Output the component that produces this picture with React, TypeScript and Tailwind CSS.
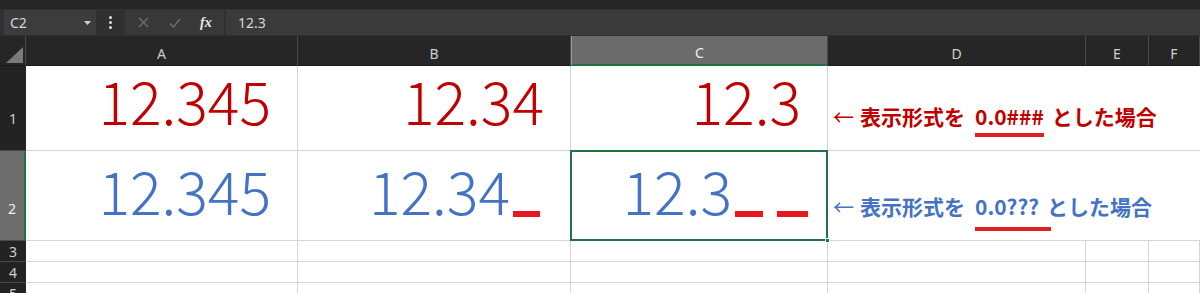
const big = "font-['Noto_Sans_CJK_JP',sans-serif] text-[59px] leading-none font-light";
const ui = "font-['Noto_Sans','Liberation_Sans',sans-serif]";
const jp = "font-['Noto_Sans_CJK_JP',sans-serif]";

const cell = 'border-b border-r border-[#d4d4d4] bg-white';

function Bar({ className = '' }: { className?: string }) {
    return <span className={`inline-block h-[6px] -mb-[2px] bg-[#e8191e] ${className}`} />;
}

function ColHead({ label, selected = false }: { label: string; selected?: boolean }) {
    return (
        <div
            className={`flex items-end justify-center pb-[1px] border-r border-b border-[#4a4a4a] border-b-[#1a1a1a] text-[14px] ${ui} ${
                selected ? 'bg-[#6b6b6b] text-[#f0f0f0] border-b-2 border-b-[#217346] border-l border-l-[#9a9a9a]' : 'bg-[#262626] text-[#cfcfcf]'
            }`}
        >
            {label}
        </div>
    );
}

function RowHead({ n, tall = false, selected = false }: { n: number; tall?: boolean; selected?: boolean }) {
    return (
        <div
            className={`flex justify-center ${tall ? 'items-end pb-[21px]' : 'items-center'} border-b border-[#4a4a4a] text-[14px] ${ui} ${
                selected ? 'bg-[#6d6d6d] text-[#eeeeee] border-r-2 border-r-[#217346]' : 'bg-[#232323] text-[#cfcfcf]'
            }`}
        >
            {n}
        </div>
    );
}

function Note({ color, code, lineClass }: { color: string; code: string; lineClass: string }) {
    return (
        <div className={`whitespace-nowrap text-[21px] leading-none font-bold ${jp} ${color}`}>
            <span className="font-normal">←</span>
            <span className="ml-[6px]">表示形式を</span>
            <span className={`ml-[10px] inline-block border-b-4 border-[#e0201f] ${lineClass}`}>{code}</span>
            <span className="ml-[8px]">とした場合</span>
        </div>
    );
}

export default function App() {
    return (
        <div className="h-[293px] w-[1200px] overflow-hidden bg-[#262626]">
            {/* formula bar */}
            <div className="mt-[9px] flex h-[27px] items-center gap-[2px] bg-[#303030] pl-[4px]">
                <div className={`flex h-[25px] w-[92px] items-center justify-between bg-[#3c3c3c] pl-[6px] pr-[5px] text-[14px] text-[#d6d6d6] ${ui}`}>
                    <span>C2</span>
                    <svg width="7" height="4" viewBox="0 0 7 4">
                        <path d="M0 0h7L3.5 4z" fill="#d0d0d0" />
                    </svg>
                </div>
                <div className="flex w-[24px] flex-col items-center gap-[2px]">
                    <span className="size-[3px] rounded-full bg-[#e0e0e0]" />
                    <span className="size-[3px] rounded-full bg-[#e0e0e0]" />
                    <span className="size-[3px] rounded-full bg-[#e0e0e0]" />
                </div>
                <div className="ml-[1px] flex h-[25px] w-[99px] items-center bg-[#383838] pl-[13px]">
                    <svg width="11" height="11" viewBox="0 0 11 11" className="mr-[20px]">
                        <path d="M1 1l9 9M10 1l-9 9" stroke="#6f6f6f" strokeWidth="1.4" />
                    </svg>
                    <svg width="12" height="10" viewBox="0 0 12 10" className="mr-[19px]">
                        <path d="M1 5.5l3.5 3.5L11 1" stroke="#6f6f6f" strokeWidth="1.4" fill="none" />
                    </svg>
                    <span className="font-['Liberation_Serif',serif] text-[14px] font-bold italic text-[#e8e8e8]">fx</span>
                </div>
                <div className={`flex h-[25px] flex-1 items-center bg-[#3a3a3a] pl-[12px] text-[14px] text-[#d6d6d6] ${ui}`}>12.3</div>
            </div>

            {/* sheet */}
            <div className="grid grid-cols-[26px_272px_273px_257px_258px_63px_1fr] grid-rows-[30px_85px_90px_21px_21px_21px]">
                <div className="flex items-end justify-end border-r border-b border-[#4a4a4a] border-b-[#1a1a1a] pb-[2px] pr-[2px]">
                    <svg width="17" height="16" viewBox="0 0 17 16">
                        <path d="M17 0V16H0z" fill="#7a7a7a" />
                    </svg>
                </div>
                <ColHead label="A" />
                <ColHead label="B" />
                <ColHead label="C" selected />
                <ColHead label="D" />
                <ColHead label="E" />
                <ColHead label="F" />

                {/* row 1 */}
                <RowHead n={1} tall />
                <div className={`${cell} pr-[26px] pt-[4px] text-right text-[#c00000] ${big}`}>12.345</div>
                <div className={`${cell} pr-[26px] pt-[4px] text-right text-[#c00000] ${big}`}>12.34</div>
                <div className={`${cell} pr-[26px] pt-[4px] text-right text-[#c00000] ${big}`}>12.3</div>
                <div className="col-span-3 border-b border-[#d4d4d4] bg-white pl-[5px] pt-[40px]">
                    <Note color="text-[#c00000]" code="0.0###" lineClass="pb-[6px]" />
                </div>

                {/* row 2 */}
                <RowHead n={2} tall selected />
                <div className={`${cell} pr-[26px] pt-[9px] text-right text-[#4472c4] ${big}`}>12.345</div>
                <div className={`${cell} pr-[30px] pt-[9px] text-right text-[#4472c4] ${big}`}>
                    12.34
                    <Bar className="ml-[3px] w-[27px]" />
                </div>
                <div className={`relative ${cell} pr-[19px] pt-[9px] text-right text-[#4472c4] ${big}`}>
                    12.3
                    <Bar className="ml-[3px] w-[28px]" />
                    <Bar className="ml-[14px] w-[31px]" />
                    <div className="absolute -left-px -top-px -bottom-px -right-px border-2 border-[#217346]" />
                    <div className="absolute -bottom-[3px] -right-[3px] size-[5px] border border-white bg-[#217346]" />
                </div>
                <div className="col-span-3 border-b border-[#d4d4d4] bg-white pl-[5px] pt-[45px]">
                    <Note color="text-[#4472c4]" code="0.0???" lineClass="pb-[10px] pr-[12px] -mr-[12px]" />
                </div>

                {[3, 4, 5].flatMap((n) => [
                    <RowHead key={`h${n}`} n={n} />,
                    ...['A', 'B', 'C', 'D', 'E', 'F'].map((c) => <div key={`${c}${n}`} className={cell} />),
                ])}
            </div>
        </div>
    );
}
